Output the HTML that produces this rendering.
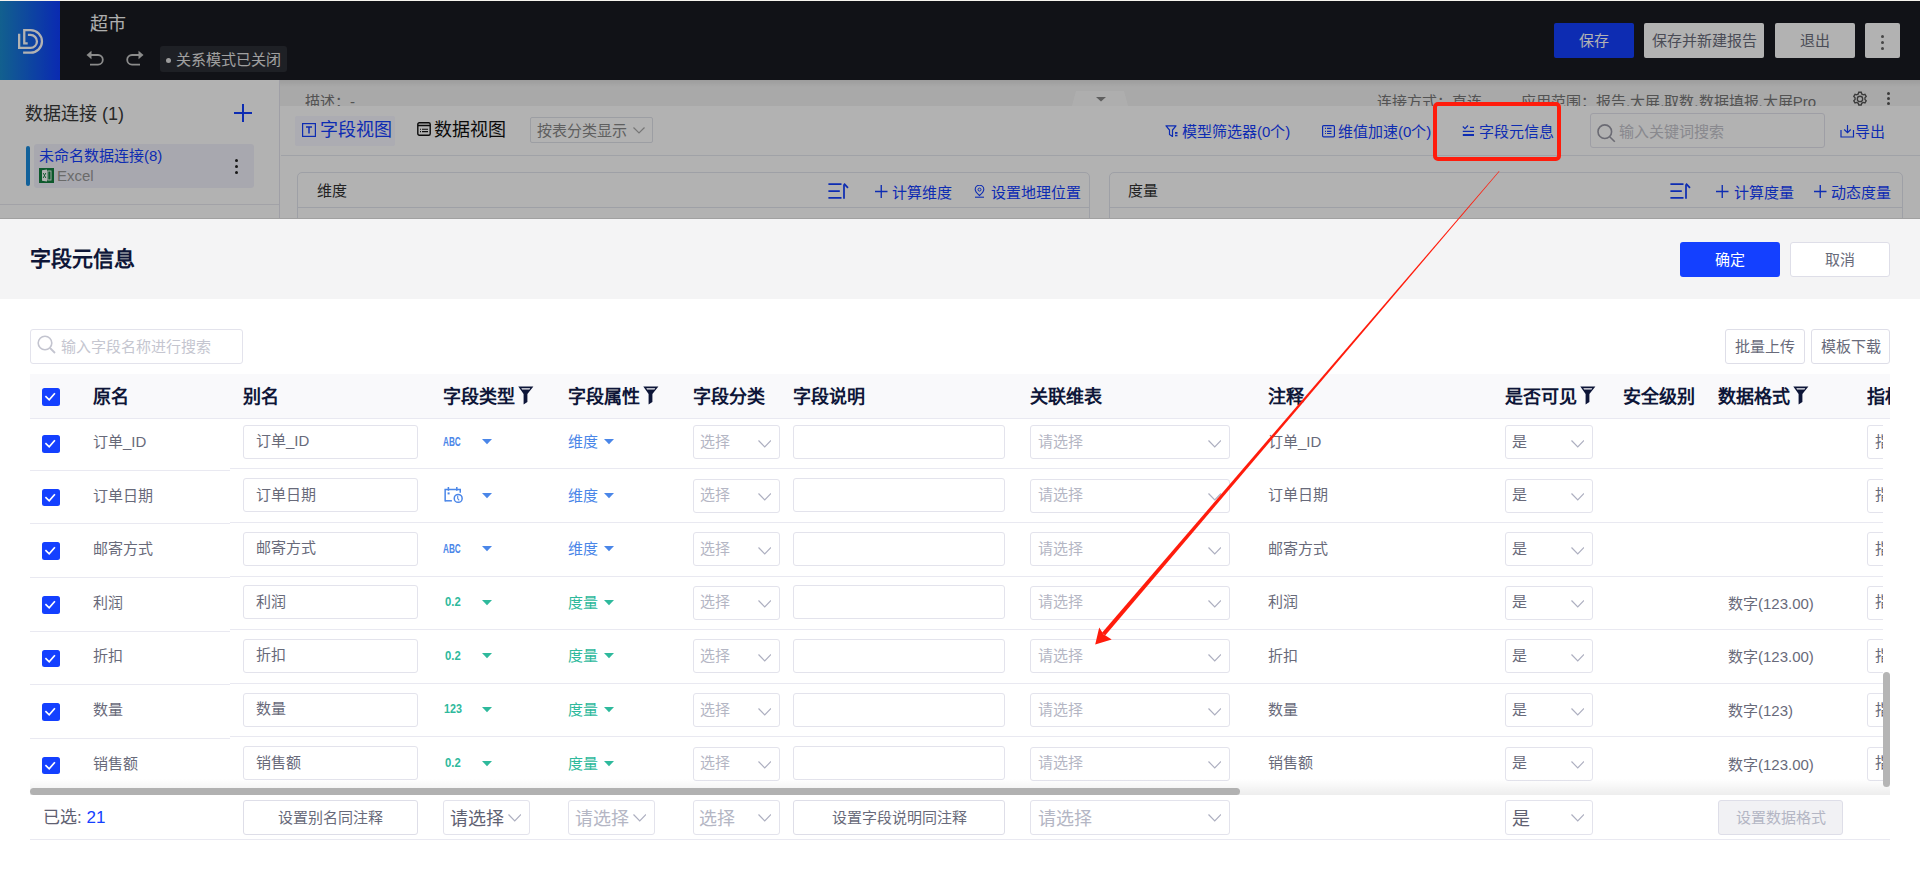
<!DOCTYPE html><html lang="zh-CN"><head><meta charset="utf-8"><style>
*{box-sizing:border-box;margin:0;padding:0}
html,body{width:1920px;height:870px;overflow:hidden;background:#fff;font-family:"Liberation Sans",sans-serif;position:relative}
.a{position:absolute;white-space:nowrap;line-height:1}
.cb{position:absolute;width:17.5px;height:17.5px;background:#1440ff;border-radius:2.5px}
.cb svg{display:block}
.box{position:absolute;border:1px solid #e3e3ec;border-radius:3px;background:#fff}
.t15{font-size:15px;color:#686a7a}
.hd{font-size:18px;font-weight:bold;color:#0e1638}
.btn{position:absolute;border:1px solid #dedee8;border-radius:3px;background:#fff;font-size:15px;color:#686a7a;text-align:center}
.bl{color:#1440ff;font-size:15px}
</style></head><body>
<div class="a" style="left:0;top:0;width:1920px;height:218px;overflow:hidden">
<div class="a" style="left:0;top:0;width:1920px;height:80.5px;background:#191b22"></div>
<div class="a" style="left:0;top:0;width:60px;height:80px;background:linear-gradient(90deg,#1a8acc,#0f3dff)"></div>
<svg class="a" style="left:10px;top:20px" width="40" height="40" viewBox="0 0 40 40"><path d="M17.9 14.95 H20.5 A6.45 6.45 0 0 1 20.5 27.85 H9.15 V13.8" fill="none" stroke="#fff" stroke-width="2.3"/><path d="M17.7 23.3 H14.25 V10.15 H20.7 A11.25 11.25 0 0 1 20.7 32.65 H13.1" fill="none" stroke="#fff" stroke-width="2.3"/></svg>
<div class="a" style="left:90px;top:15px;font-size:18px;color:#fafafa">超市</div>
<svg class="a" style="left:86px;top:49px" width="20" height="17" viewBox="0 0 20 17"><path d="M4 6 H12 A4.8 4.8 0 0 1 12 15.6 H4" fill="none" stroke="#c8c8c8" stroke-width="1.8"/><path d="M0.5 6 L5.5 1.8 V10.2Z" fill="#c8c8c8"/></svg>
<svg class="a" style="left:124px;top:49px" width="20" height="17" viewBox="0 0 20 17"><path d="M16 6 H8 A4.8 4.8 0 0 0 8 15.6 H16" fill="none" stroke="#c8c8c8" stroke-width="1.8"/><path d="M19.5 6 L14.5 1.8 V10.2Z" fill="#c8c8c8"/></svg>
<div class="a" style="left:160px;top:46px;width:127px;height:26px;background:#2c2e35;border-radius:3px"></div>
<div class="a" style="left:166px;top:58px;width:5px;height:5px;border-radius:3px;background:#e0e0e0"></div>
<div class="a" style="left:176px;top:52px;font-size:15px;color:#e6e6e6">关系模式已关闭</div>
<div class="a" style="left:1554px;top:23px;width:80px;height:35px;background:#1440ff;border-radius:2px;color:#fff;font-size:15px;text-align:center;line-height:35px">保存</div>
<div class="a" style="left:1644px;top:23px;width:120px;height:35px;background:#fff;border-radius:2px;color:#6b6d7c;font-size:15px;text-align:center;line-height:35px">保存并新建报告</div>
<div class="a" style="left:1775px;top:23px;width:80px;height:35px;background:#fff;border-radius:2px;color:#6b6d7c;font-size:15px;text-align:center;line-height:35px">退出</div>
<div class="a" style="left:1865px;top:23px;width:35px;height:35px;background:#fff;border-radius:2px"></div>
<div class="a" style="left:1881px;top:35px;width:3px;height:3px;border-radius:2px;background:#666"></div>
<div class="a" style="left:1881px;top:41px;width:3px;height:3px;border-radius:2px;background:#666"></div>
<div class="a" style="left:1881px;top:47px;width:3px;height:3px;border-radius:2px;background:#666"></div>
<div class="a" style="left:0;top:80px;width:280px;height:138px;background:#fff;border-right:1px solid #e4e4ee"></div>
<div class="a" style="left:25px;top:105px;font-size:18px;color:#3a3a3a">数据连接 (1)</div>
<div class="a" style="left:234px;top:112px;width:18px;height:2px;background:#1440ff"></div><div class="a" style="left:242px;top:104px;width:2px;height:18px;background:#1440ff"></div>
<div class="a" style="left:34px;top:144px;width:220px;height:44px;background:#f1f1fb;border-radius:3px"></div>
<div class="a" style="left:26px;top:146px;width:4px;height:40px;background:#1a8bdd;border-radius:2px"></div>
<div class="a" style="left:39px;top:148px;font-size:15px;color:#1440ff">未命名数据连接(8)</div>
<svg class="a" style="left:39px;top:168px" width="15" height="15" viewBox="0 0 15 15"><rect width="15" height="15" fill="#138040"/><path d="M3 2.3 L8 1.5 V13.5 L3 12.7Z" fill="#fff"/><rect x="8.8" y="3" width="3.2" height="9" fill="none" stroke="#fff" stroke-width="0.9"/><path d="M4.2 5 L6.8 10 M6.8 5 L4.2 10" stroke="#138040" stroke-width="0.9"/></svg>
<div class="a" style="left:57px;top:168px;font-size:15px;color:#999">Excel</div>
<div class="a" style="left:235px;top:159px;width:3px;height:3px;border-radius:2px;background:#222"></div>
<div class="a" style="left:235px;top:165px;width:3px;height:3px;border-radius:2px;background:#222"></div>
<div class="a" style="left:235px;top:171px;width:3px;height:3px;border-radius:2px;background:#222"></div>
<div class="a" style="left:0;top:204px;width:279px;height:1px;background:#e8e8f0"></div>
<div class="a" style="left:280px;top:80px;width:1640px;height:26px;background:#f2f2f2"></div><div class="a" style="left:280px;top:80px;width:1640px;height:7px;background:linear-gradient(rgba(0,0,0,0.07),rgba(0,0,0,0))"></div>
<div class="a" style="left:305px;top:93px;height:13px;overflow:hidden;font-size:15px;color:#777;line-height:17px">描述：-</div>
<svg class="a" style="left:1072px;top:91px" width="56" height="15" viewBox="0 0 56 15"><path d="M4 0 H52 L56 15 H0Z" fill="#fafafa"/><path d="M24 6 H34 L29 10.5Z" fill="#888"/></svg>
<div class="a" style="left:1377px;top:93px;height:13px;overflow:hidden;font-size:15px;color:#777;line-height:17px">连接方式：直连</div>
<div class="a" style="left:1521px;top:93px;height:13px;overflow:hidden;font-size:15px;color:#777;line-height:17px">应用范围：报告.大屏.取数.数据填报.大屏Pro</div>
<svg class="a" style="left:1851px;top:90px" width="18" height="16" viewBox="0 0 20 17.8"><g fill="none" stroke="#555" stroke-width="1.5"><circle cx="10" cy="10" r="3"/><path d="M8.6 2.5 H11.4 L11.9 4.4 L13.6 5.4 L15.5 4.8 L16.9 7.2 L15.5 8.6 V10.6 L16.9 12 L15.5 14.4 L13.6 13.8 L11.9 14.8 L11.4 16.7 H8.6 L8.1 14.8 L6.4 13.8 L4.5 14.4 L3.1 12 L4.5 10.6 V8.6 L3.1 7.2 L4.5 4.8 L6.4 5.4 L8.1 4.4Z"/></g></svg>
<div class="a" style="left:1887px;top:92px;width:3px;height:3px;border-radius:2px;background:#555"></div>
<div class="a" style="left:1887px;top:97px;width:3px;height:3px;border-radius:2px;background:#555"></div>
<div class="a" style="left:1887px;top:102px;width:3px;height:3px;border-radius:2px;background:#555"></div>
<div class="a" style="left:280px;top:106px;width:1640px;height:112px;background:#fff"></div>
<div class="a" style="left:281px;top:155px;width:1639px;height:1px;background:#e6e8f0"></div>
<div class="a" style="left:295px;top:116px;width:100px;height:30px;background:#f6f6ff;border-radius:2px"></div>
<svg class="a" style="left:302px;top:123px" width="14" height="14" viewBox="0 0 14 14"><rect x="0.6" y="0.6" width="12.8" height="12.8" fill="none" stroke="#1440ff" stroke-width="1.2"/><path d="M4 4 H10 M7 4 V10.5" stroke="#1440ff" stroke-width="1.5"/></svg>
<div class="a" style="left:320px;top:121px;font-size:18px;color:#1440ff">字段视图</div>
<svg class="a" style="left:417px;top:122px" width="14" height="14" viewBox="0 0 14 14"><rect x="0.8" y="0.8" width="12.4" height="12.4" rx="1.5" fill="none" stroke="#111" stroke-width="1.4"/><path d="M1 3.5 H13" stroke="#111" stroke-width="1.5"/><path d="M5 7.3 H11 M5 9.6 H11" stroke="#111" stroke-width="1.1"/><path d="M3 7.3 H4 M3 9.6 H4" stroke="#111" stroke-width="1.1"/></svg>
<div class="a" style="left:434px;top:121px;font-size:18px;color:#111">数据视图</div>
<div class="a" style="left:530px;top:117px;width:123px;height:26px;border:1px solid #e0e2ea;border-radius:2px"></div>
<div class="a" style="left:537px;top:123px;font-size:15px;color:#888">按表分类显示</div>
<svg class="a" style="left:633px;top:127px" width="12" height="7" viewBox="0 0 12 7"><path d="M0.5 0.5 L6.0 6 L11.5 0.5" fill="none" stroke="#aaa" stroke-width="1.2"/></svg>
<svg class="a" style="left:1165px;top:125px" width="14" height="13" viewBox="0 0 14 13"><path d="M1 0.8 H11 L7.5 5 V11.5 L4.5 9.5 V5Z" fill="none" stroke="#1440ff" stroke-width="1.2" stroke-linejoin="round"/><rect x="10" y="7" width="2.5" height="1.8" fill="#1440ff"/><rect x="10" y="9.8" width="2.5" height="1.5" fill="#1440ff"/></svg>
<div class="a bl" style="left:1182px;top:124px">模型筛选器(0个)</div>
<svg class="a" style="left:1322px;top:125px" width="13" height="13" viewBox="0 0 13 13"><rect x="0.6" y="0.6" width="11.8" height="11.2" rx="1" fill="none" stroke="#1440ff" stroke-width="1.2"/><path d="M3 3.4 H4 M5 3.4 H9.5 M3 6.4 H4 M5 6.4 H9.5 M3 8.5 H4 M5 8.5 H9.5" stroke="#1440ff" stroke-width="1.1"/></svg>
<div class="a bl" style="left:1338px;top:124px">维值加速(0个)</div>
<svg class="a" style="left:1462px;top:125px" width="13" height="12" viewBox="0 0 13 12"><path d="M0.8 1.5 L3 3.6 L6 0.5" fill="none" stroke="#1440ff" stroke-width="1.2"/><path d="M8 2.4 H12 M0.8 6.4 H12" stroke="#1440ff" stroke-width="1.1"/><path d="M0.8 10 H12" stroke="#1440ff" stroke-width="2"/></svg>
<div class="a bl" style="left:1479px;top:124px">字段元信息</div>
<div class="a" style="left:1590px;top:113px;width:235px;height:35px;border:1px solid #e3e3ec;border-radius:3px"></div>
<svg class="a" style="left:1596px;top:123px" width="20" height="20" viewBox="0 0 20 20"><circle cx="8.8" cy="8.7" r="6.8" fill="none" stroke="#9a9aa6" stroke-width="1.6"/><path d="M13.7 13.7 L18.8 18.7" stroke="#9a9aa6" stroke-width="1.6"/></svg>
<div class="a" style="left:1619px;top:124px;font-size:15px;color:#c4c4cc">输入关键词搜索</div>
<svg class="a" style="left:1840px;top:124px" width="15" height="14" viewBox="0 0 15 14"><path d="M1 6 V13 H13.5 V6" fill="none" stroke="#1440ff" stroke-width="1.2"/><path d="M7.5 1 V8.5 M4.2 5.5 L7.5 8.7 L10.8 5.5" fill="none" stroke="#1440ff" stroke-width="1.2"/></svg>
<div class="a bl" style="left:1855px;top:124px">导出</div>
<div class="a" style="left:297px;top:172px;width:793px;height:60px;border:1px solid #e3e5ee;border-radius:5px"></div>
<div class="a" style="left:298px;top:207px;width:791px;height:1px;background:#e3e5ee"></div>
<div class="a" style="left:317px;top:183px;font-size:15px;color:#333">维度</div>
<svg class="a" style="left:828px;top:183px" width="21" height="16" viewBox="0 0 21 16"><path d="M0.4 1 H13.5 M0.4 8 H11.8 M0.4 14.9 H13.5" stroke="#1440ff" stroke-width="1.75"/><path d="M16 1.5 V15.8" stroke="#1440ff" stroke-width="1.75"/><path d="M16 0.6 L20 4.8" fill="none" stroke="#1440ff" stroke-width="1.75"/></svg>
<svg class="a" style="left:875px;top:185px" width="12.5" height="13" viewBox="0 0 12.5 13"><path d="M0 6.5 H12.5 M6.25 0 V13" stroke="#1440ff" stroke-width="1.35"/></svg>
<div class="a bl" style="left:892px;top:184.5px">计算维度</div>
<svg class="a" style="left:974px;top:185px" width="11" height="13" viewBox="0 0 11 13"><path d="M5.5 10.5 C2 7.5 1.2 5.8 1.2 4.5 A4.3 4.3 0 0 1 9.8 4.5 C9.8 5.8 9 7.5 5.5 10.5Z" fill="none" stroke="#1440ff" stroke-width="1.1"/><circle cx="5.5" cy="4.6" r="1.5" fill="none" stroke="#1440ff" stroke-width="1"/><path d="M1 12.2 H10" stroke="#1440ff" stroke-width="1.1"/></svg>
<div class="a bl" style="left:991px;top:184.5px">设置地理位置</div>
<div class="a" style="left:1109px;top:172px;width:794px;height:60px;border:1px solid #e3e5ee;border-radius:5px"></div>
<div class="a" style="left:1110px;top:207px;width:792px;height:1px;background:#e3e5ee"></div>
<div class="a" style="left:1128px;top:183px;font-size:15px;color:#333">度量</div>
<svg class="a" style="left:1670px;top:183px" width="21" height="16" viewBox="0 0 21 16"><path d="M0.4 1 H13.5 M0.4 8 H11.8 M0.4 14.9 H13.5" stroke="#1440ff" stroke-width="1.75"/><path d="M16 1.5 V15.8" stroke="#1440ff" stroke-width="1.75"/><path d="M16 0.6 L20 4.8" fill="none" stroke="#1440ff" stroke-width="1.75"/></svg>
<svg class="a" style="left:1716px;top:185px" width="12.5" height="13" viewBox="0 0 12.5 13"><path d="M0 6.5 H12.5 M6.25 0 V13" stroke="#1440ff" stroke-width="1.35"/></svg>
<div class="a bl" style="left:1734px;top:184.5px">计算度量</div>
<svg class="a" style="left:1814px;top:185px" width="12.5" height="13" viewBox="0 0 12.5 13"><path d="M0 6.5 H12.5 M6.25 0 V13" stroke="#1440ff" stroke-width="1.35"/></svg>
<div class="a bl" style="left:1831px;top:184.5px">动态度量</div>
<div class="a" style="left:0;top:0;width:1920px;height:218px;background:rgba(0,0,0,0.3)"></div>
<div class="a" style="left:0;top:0;width:1920px;height:1px;background:#f6f4ee"></div>
</div>
<div class="a" style="left:0;top:218px;width:1920px;height:1px;background:#a0a0a0"></div>
<div class="a" style="left:0;top:219px;width:1920px;height:80px;background:#f4f4f5"></div>
<div class="a" style="left:30px;top:248px;font-size:21px;font-weight:bold;color:#0e1638">字段元信息</div>
<div class="a" style="left:1680px;top:242px;width:100px;height:35px;background:#1440ff;border-radius:3px;color:#fff;font-size:15px;text-align:center;line-height:35px">确定</div>
<div class="btn" style="left:1790px;top:242px;width:100px;height:35px;line-height:33px">取消</div>
<div class="box" style="left:30px;top:329px;width:213px;height:35px"></div>
<svg class="a" style="left:37px;top:335px" width="20" height="20" viewBox="0 0 20 20"><circle cx="8" cy="8" r="6.8" fill="none" stroke="#c3c4cf" stroke-width="1.6"/><path d="M13 13 L18 18" stroke="#c3c4cf" stroke-width="1.8"/></svg>
<div class="a" style="left:61px;top:339px;font-size:15px;color:#c5c6d0">输入字段名称进行搜索</div>
<div class="btn" style="left:1725px;top:329px;width:80px;height:35px;line-height:33px">批量上传</div>
<div class="btn" style="left:1811px;top:329px;width:79px;height:35px;line-height:33px">模板下载</div>
<div class="a" style="left:30px;top:374px;width:1860px;height:44px;background:#f9f9fb"></div>
<div class="a" style="left:30px;top:418px;width:1860px;height:1px;background:#e9e9f1"></div>
<div class="cb" style="left:42.3px;top:388.2px"><svg width="17" height="17" viewBox="0 0 17 17"><path d="M3.4 8.2 L7.2 11.8 L12.9 5.2" fill="none" stroke="#fff" stroke-width="1.7"/></svg></div>
<div class="a hd" style="left:93px;top:388px">原名</div>
<div class="a hd" style="left:243px;top:388px">别名</div>
<div class="a hd" style="left:443px;top:388px">字段类型</div>
<svg class="a" style="left:517.6px;top:385.5px" width="16" height="19" viewBox="0 0 16 19"><path d="M0.3 0.5 H15.4 L9.4 8 V16 L5.6 18.4 V8 Z M3.3 2.3 H12.2 L11.5 3.4 H4.1 Z" fill="#0e1638" fill-rule="evenodd"/></svg>
<div class="a hd" style="left:568px;top:388px">字段属性</div>
<svg class="a" style="left:642.6px;top:385.5px" width="16" height="19" viewBox="0 0 16 19"><path d="M0.3 0.5 H15.4 L9.4 8 V16 L5.6 18.4 V8 Z M3.3 2.3 H12.2 L11.5 3.4 H4.1 Z" fill="#0e1638" fill-rule="evenodd"/></svg>
<div class="a hd" style="left:693px;top:388px">字段分类</div>
<div class="a hd" style="left:793px;top:388px">字段说明</div>
<div class="a hd" style="left:1030px;top:388px">关联维表</div>
<div class="a hd" style="left:1268px;top:388px">注释</div>
<div class="a hd" style="left:1505px;top:388px">是否可见</div>
<svg class="a" style="left:1579.6px;top:385.5px" width="16" height="19" viewBox="0 0 16 19"><path d="M0.3 0.5 H15.4 L9.4 8 V16 L5.6 18.4 V8 Z M3.3 2.3 H12.2 L11.5 3.4 H4.1 Z" fill="#0e1638" fill-rule="evenodd"/></svg>
<div class="a hd" style="left:1623px;top:388px">安全级别</div>
<div class="a hd" style="left:1718px;top:388px">数据格式</div>
<svg class="a" style="left:1792.6px;top:385.5px" width="16" height="19" viewBox="0 0 16 19"><path d="M0.3 0.5 H15.4 L9.4 8 V16 L5.6 18.4 V8 Z M3.3 2.3 H12.2 L11.5 3.4 H4.1 Z" fill="#0e1638" fill-rule="evenodd"/></svg>
<div class="a" style="left:1867px;top:374px;width:23px;height:44px;overflow:hidden"><div class="a hd" style="left:0;top:14px">指标</div></div>
<div class="a" style="left:30px;top:419px;width:1853px;height:369px;overflow:hidden">
<div class="a" style="left:0px;top:50.8px;width:200px;height:1px;background:#e9e9f1"></div>
<div class="a" style="left:200px;top:49.3px;width:1700px;height:1px;background:#e9e9f1"></div>
<div class="cb" style="left:12.299999999999997px;top:16.2px"><svg width="17" height="17" viewBox="0 0 17 17"><path d="M3.4 8.2 L7.2 11.8 L12.9 5.2" fill="none" stroke="#fff" stroke-width="1.7"/></svg></div>
<div class="a t15" style="left:63px;top:15.0px">订单_ID</div>
<div class="box" style="left:213px;top:5.5px;width:175px;height:34px"></div>
<div class="a t15" style="left:226px;top:14.0px">订单_ID</div>
<div class="a" style="left:413px;top:15.9px;font-size:13px;font-weight:bold;color:#4a86e8;transform:scaleX(0.63);transform-origin:0 0">ABC</div>
<svg class="a" style="left:452px;top:20.0px" width="10" height="6" viewBox="0 0 10 6"><path d="M0 0 H10 L5 5.3Z" fill="#4a86e8"/></svg>
<div class="a" style="left:538px;top:15.0px;font-size:15px;color:#4a86e8">维度</div>
<svg class="a" style="left:574px;top:20.0px" width="10" height="6" viewBox="0 0 10 6"><path d="M0 0 H10 L5 5.3Z" fill="#4a86e8"/></svg>
<div class="box" style="left:663px;top:6.0px;width:87px;height:34px"></div>
<div class="a" style="left:670px;top:14.5px;font-size:15px;color:#b4b6c4">选择</div>
<svg class="a" style="left:727.8px;top:20.5px" width="13.5" height="8" viewBox="0 0 13.5 8"><path d="M0.5 0.5 L6.75 7 L13.0 0.5" fill="none" stroke="#adafc0" stroke-width="1.2"/></svg>
<div class="box" style="left:763px;top:5.5px;width:212px;height:34px"></div>
<div class="box" style="left:1000px;top:6.0px;width:200px;height:34px"></div>
<div class="a" style="left:1008px;top:14.5px;font-size:15px;color:#b4b6c4">请选择</div>
<svg class="a" style="left:1177.8px;top:20.5px" width="13.5" height="8" viewBox="0 0 13.5 8"><path d="M0.5 0.5 L6.75 7 L13.0 0.5" fill="none" stroke="#adafc0" stroke-width="1.2"/></svg>
<div class="a t15" style="left:1238px;top:14.5px">订单_ID</div>
<div class="box" style="left:1475px;top:6.0px;width:88px;height:34px"></div>
<div class="a t15" style="left:1482px;top:14.5px">是</div>
<svg class="a" style="left:1540.8px;top:20.5px" width="13.5" height="8" viewBox="0 0 13.5 8"><path d="M0.5 0.5 L6.75 7 L13.0 0.5" fill="none" stroke="#adafc0" stroke-width="1.2"/></svg>
<div class="box" style="left:1837px;top:6.0px;width:60px;height:34px"></div>
<div class="a t15" style="left:1845px;top:14.5px">指标</div>
<div class="a" style="left:0px;top:104.4px;width:200px;height:1px;background:#e9e9f1"></div>
<div class="a" style="left:200px;top:102.9px;width:1700px;height:1px;background:#e9e9f1"></div>
<div class="cb" style="left:12.299999999999997px;top:69.8px"><svg width="17" height="17" viewBox="0 0 17 17"><path d="M3.4 8.2 L7.2 11.8 L12.9 5.2" fill="none" stroke="#fff" stroke-width="1.7"/></svg></div>
<div class="a t15" style="left:63px;top:68.6px">订单日期</div>
<div class="box" style="left:213px;top:59.1px;width:175px;height:34px"></div>
<div class="a t15" style="left:226px;top:67.6px">订单日期</div>
<svg class="a" style="left:410px;top:62.8px" width="28" height="24" viewBox="0 0 28 24"><g fill="none" stroke="#4a86e8" stroke-width="1.5"><path d="M5.15 19.5 V7.6 H20.25 V10.8"/><path d="M5.15 18.8 H11.9"/><path d="M8.4 5 V8.8 M16.8 5 V8.8"/><circle cx="18.2" cy="16.4" r="3.95"/><path d="M17.7 13.8 V16.6 L19.2 18.4" stroke-width="1.1"/></g><rect x="7.6" y="10.4" width="2" height="2" fill="#4a86e8"/></svg>
<svg class="a" style="left:452px;top:73.6px" width="10" height="6" viewBox="0 0 10 6"><path d="M0 0 H10 L5 5.3Z" fill="#4a86e8"/></svg>
<div class="a" style="left:538px;top:68.6px;font-size:15px;color:#4a86e8">维度</div>
<svg class="a" style="left:574px;top:73.6px" width="10" height="6" viewBox="0 0 10 6"><path d="M0 0 H10 L5 5.3Z" fill="#4a86e8"/></svg>
<div class="box" style="left:663px;top:59.6px;width:87px;height:34px"></div>
<div class="a" style="left:670px;top:68.1px;font-size:15px;color:#b4b6c4">选择</div>
<svg class="a" style="left:727.8px;top:74.1px" width="13.5" height="8" viewBox="0 0 13.5 8"><path d="M0.5 0.5 L6.75 7 L13.0 0.5" fill="none" stroke="#adafc0" stroke-width="1.2"/></svg>
<div class="box" style="left:763px;top:59.1px;width:212px;height:34px"></div>
<div class="box" style="left:1000px;top:59.6px;width:200px;height:34px"></div>
<div class="a" style="left:1008px;top:68.1px;font-size:15px;color:#b4b6c4">请选择</div>
<svg class="a" style="left:1177.8px;top:74.1px" width="13.5" height="8" viewBox="0 0 13.5 8"><path d="M0.5 0.5 L6.75 7 L13.0 0.5" fill="none" stroke="#adafc0" stroke-width="1.2"/></svg>
<div class="a t15" style="left:1238px;top:68.1px">订单日期</div>
<div class="box" style="left:1475px;top:59.6px;width:88px;height:34px"></div>
<div class="a t15" style="left:1482px;top:68.1px">是</div>
<svg class="a" style="left:1540.8px;top:74.1px" width="13.5" height="8" viewBox="0 0 13.5 8"><path d="M0.5 0.5 L6.75 7 L13.0 0.5" fill="none" stroke="#adafc0" stroke-width="1.2"/></svg>
<div class="box" style="left:1837px;top:59.6px;width:60px;height:34px"></div>
<div class="a t15" style="left:1845px;top:68.1px">指标</div>
<div class="a" style="left:0px;top:158.0px;width:200px;height:1px;background:#e9e9f1"></div>
<div class="a" style="left:200px;top:156.5px;width:1700px;height:1px;background:#e9e9f1"></div>
<div class="cb" style="left:12.299999999999997px;top:123.4px"><svg width="17" height="17" viewBox="0 0 17 17"><path d="M3.4 8.2 L7.2 11.8 L12.9 5.2" fill="none" stroke="#fff" stroke-width="1.7"/></svg></div>
<div class="a t15" style="left:63px;top:122.2px">邮寄方式</div>
<div class="box" style="left:213px;top:112.7px;width:175px;height:34px"></div>
<div class="a t15" style="left:226px;top:121.2px">邮寄方式</div>
<div class="a" style="left:413px;top:123.1px;font-size:13px;font-weight:bold;color:#4a86e8;transform:scaleX(0.63);transform-origin:0 0">ABC</div>
<svg class="a" style="left:452px;top:127.2px" width="10" height="6" viewBox="0 0 10 6"><path d="M0 0 H10 L5 5.3Z" fill="#4a86e8"/></svg>
<div class="a" style="left:538px;top:122.2px;font-size:15px;color:#4a86e8">维度</div>
<svg class="a" style="left:574px;top:127.2px" width="10" height="6" viewBox="0 0 10 6"><path d="M0 0 H10 L5 5.3Z" fill="#4a86e8"/></svg>
<div class="box" style="left:663px;top:113.2px;width:87px;height:34px"></div>
<div class="a" style="left:670px;top:121.7px;font-size:15px;color:#b4b6c4">选择</div>
<svg class="a" style="left:727.8px;top:127.7px" width="13.5" height="8" viewBox="0 0 13.5 8"><path d="M0.5 0.5 L6.75 7 L13.0 0.5" fill="none" stroke="#adafc0" stroke-width="1.2"/></svg>
<div class="box" style="left:763px;top:112.7px;width:212px;height:34px"></div>
<div class="box" style="left:1000px;top:113.2px;width:200px;height:34px"></div>
<div class="a" style="left:1008px;top:121.7px;font-size:15px;color:#b4b6c4">请选择</div>
<svg class="a" style="left:1177.8px;top:127.7px" width="13.5" height="8" viewBox="0 0 13.5 8"><path d="M0.5 0.5 L6.75 7 L13.0 0.5" fill="none" stroke="#adafc0" stroke-width="1.2"/></svg>
<div class="a t15" style="left:1238px;top:121.7px">邮寄方式</div>
<div class="box" style="left:1475px;top:113.2px;width:88px;height:34px"></div>
<div class="a t15" style="left:1482px;top:121.7px">是</div>
<svg class="a" style="left:1540.8px;top:127.7px" width="13.5" height="8" viewBox="0 0 13.5 8"><path d="M0.5 0.5 L6.75 7 L13.0 0.5" fill="none" stroke="#adafc0" stroke-width="1.2"/></svg>
<div class="box" style="left:1837px;top:113.2px;width:60px;height:34px"></div>
<div class="a t15" style="left:1845px;top:121.7px">指标</div>
<div class="a" style="left:0px;top:211.6px;width:200px;height:1px;background:#e9e9f1"></div>
<div class="a" style="left:200px;top:210.1px;width:1700px;height:1px;background:#e9e9f1"></div>
<div class="cb" style="left:12.299999999999997px;top:177.0px"><svg width="17" height="17" viewBox="0 0 17 17"><path d="M3.4 8.2 L7.2 11.8 L12.9 5.2" fill="none" stroke="#fff" stroke-width="1.7"/></svg></div>
<div class="a t15" style="left:63px;top:175.8px">利润</div>
<div class="box" style="left:213px;top:166.3px;width:175px;height:34px"></div>
<div class="a t15" style="left:226px;top:174.8px">利润</div>
<div class="a" style="left:415px;top:177.0px;font-size:12.5px;font-weight:bold;color:#2eb99c;transform:scaleX(0.9);transform-origin:0 0">0.2</div>
<svg class="a" style="left:452px;top:180.8px" width="10" height="6" viewBox="0 0 10 6"><path d="M0 0 H10 L5 5.3Z" fill="#2eb99c"/></svg>
<div class="a" style="left:538px;top:175.8px;font-size:15px;color:#2eb99c">度量</div>
<svg class="a" style="left:574px;top:180.8px" width="10" height="6" viewBox="0 0 10 6"><path d="M0 0 H10 L5 5.3Z" fill="#2eb99c"/></svg>
<div class="box" style="left:663px;top:166.8px;width:87px;height:34px"></div>
<div class="a" style="left:670px;top:175.3px;font-size:15px;color:#b4b6c4">选择</div>
<svg class="a" style="left:727.8px;top:181.3px" width="13.5" height="8" viewBox="0 0 13.5 8"><path d="M0.5 0.5 L6.75 7 L13.0 0.5" fill="none" stroke="#adafc0" stroke-width="1.2"/></svg>
<div class="box" style="left:763px;top:166.3px;width:212px;height:34px"></div>
<div class="box" style="left:1000px;top:166.8px;width:200px;height:34px"></div>
<div class="a" style="left:1008px;top:175.3px;font-size:15px;color:#b4b6c4">请选择</div>
<svg class="a" style="left:1177.8px;top:181.3px" width="13.5" height="8" viewBox="0 0 13.5 8"><path d="M0.5 0.5 L6.75 7 L13.0 0.5" fill="none" stroke="#adafc0" stroke-width="1.2"/></svg>
<div class="a t15" style="left:1238px;top:175.3px">利润</div>
<div class="box" style="left:1475px;top:166.8px;width:88px;height:34px"></div>
<div class="a t15" style="left:1482px;top:175.3px">是</div>
<svg class="a" style="left:1540.8px;top:181.3px" width="13.5" height="8" viewBox="0 0 13.5 8"><path d="M0.5 0.5 L6.75 7 L13.0 0.5" fill="none" stroke="#adafc0" stroke-width="1.2"/></svg>
<div class="a t15" style="left:1698px;top:176.8px">数字(123.00)</div>
<div class="box" style="left:1837px;top:166.8px;width:60px;height:34px"></div>
<div class="a t15" style="left:1845px;top:175.3px">指标</div>
<div class="a" style="left:0px;top:265.2px;width:200px;height:1px;background:#e9e9f1"></div>
<div class="a" style="left:200px;top:263.7px;width:1700px;height:1px;background:#e9e9f1"></div>
<div class="cb" style="left:12.299999999999997px;top:230.6px"><svg width="17" height="17" viewBox="0 0 17 17"><path d="M3.4 8.2 L7.2 11.8 L12.9 5.2" fill="none" stroke="#fff" stroke-width="1.7"/></svg></div>
<div class="a t15" style="left:63px;top:229.4px">折扣</div>
<div class="box" style="left:213px;top:219.9px;width:175px;height:34px"></div>
<div class="a t15" style="left:226px;top:228.4px">折扣</div>
<div class="a" style="left:415px;top:230.6px;font-size:12.5px;font-weight:bold;color:#2eb99c;transform:scaleX(0.9);transform-origin:0 0">0.2</div>
<svg class="a" style="left:452px;top:234.4px" width="10" height="6" viewBox="0 0 10 6"><path d="M0 0 H10 L5 5.3Z" fill="#2eb99c"/></svg>
<div class="a" style="left:538px;top:229.4px;font-size:15px;color:#2eb99c">度量</div>
<svg class="a" style="left:574px;top:234.4px" width="10" height="6" viewBox="0 0 10 6"><path d="M0 0 H10 L5 5.3Z" fill="#2eb99c"/></svg>
<div class="box" style="left:663px;top:220.4px;width:87px;height:34px"></div>
<div class="a" style="left:670px;top:228.9px;font-size:15px;color:#b4b6c4">选择</div>
<svg class="a" style="left:727.8px;top:234.9px" width="13.5" height="8" viewBox="0 0 13.5 8"><path d="M0.5 0.5 L6.75 7 L13.0 0.5" fill="none" stroke="#adafc0" stroke-width="1.2"/></svg>
<div class="box" style="left:763px;top:219.9px;width:212px;height:34px"></div>
<div class="box" style="left:1000px;top:220.4px;width:200px;height:34px"></div>
<div class="a" style="left:1008px;top:228.9px;font-size:15px;color:#b4b6c4">请选择</div>
<svg class="a" style="left:1177.8px;top:234.9px" width="13.5" height="8" viewBox="0 0 13.5 8"><path d="M0.5 0.5 L6.75 7 L13.0 0.5" fill="none" stroke="#adafc0" stroke-width="1.2"/></svg>
<div class="a t15" style="left:1238px;top:228.9px">折扣</div>
<div class="box" style="left:1475px;top:220.4px;width:88px;height:34px"></div>
<div class="a t15" style="left:1482px;top:228.9px">是</div>
<svg class="a" style="left:1540.8px;top:234.9px" width="13.5" height="8" viewBox="0 0 13.5 8"><path d="M0.5 0.5 L6.75 7 L13.0 0.5" fill="none" stroke="#adafc0" stroke-width="1.2"/></svg>
<div class="a t15" style="left:1698px;top:230.4px">数字(123.00)</div>
<div class="box" style="left:1837px;top:220.4px;width:60px;height:34px"></div>
<div class="a t15" style="left:1845px;top:228.9px">指标</div>
<div class="a" style="left:0px;top:318.8px;width:200px;height:1px;background:#e9e9f1"></div>
<div class="a" style="left:200px;top:317.3px;width:1700px;height:1px;background:#e9e9f1"></div>
<div class="cb" style="left:12.299999999999997px;top:284.2px"><svg width="17" height="17" viewBox="0 0 17 17"><path d="M3.4 8.2 L7.2 11.8 L12.9 5.2" fill="none" stroke="#fff" stroke-width="1.7"/></svg></div>
<div class="a t15" style="left:63px;top:283.0px">数量</div>
<div class="box" style="left:213px;top:273.5px;width:175px;height:34px"></div>
<div class="a t15" style="left:226px;top:282.0px">数量</div>
<div class="a" style="left:414px;top:284.2px;font-size:12.5px;font-weight:bold;color:#2eb99c;transform:scaleX(0.86);transform-origin:0 0">123</div>
<svg class="a" style="left:452px;top:288.0px" width="10" height="6" viewBox="0 0 10 6"><path d="M0 0 H10 L5 5.3Z" fill="#2eb99c"/></svg>
<div class="a" style="left:538px;top:283.0px;font-size:15px;color:#2eb99c">度量</div>
<svg class="a" style="left:574px;top:288.0px" width="10" height="6" viewBox="0 0 10 6"><path d="M0 0 H10 L5 5.3Z" fill="#2eb99c"/></svg>
<div class="box" style="left:663px;top:274.0px;width:87px;height:34px"></div>
<div class="a" style="left:670px;top:282.5px;font-size:15px;color:#b4b6c4">选择</div>
<svg class="a" style="left:727.8px;top:288.5px" width="13.5" height="8" viewBox="0 0 13.5 8"><path d="M0.5 0.5 L6.75 7 L13.0 0.5" fill="none" stroke="#adafc0" stroke-width="1.2"/></svg>
<div class="box" style="left:763px;top:273.5px;width:212px;height:34px"></div>
<div class="box" style="left:1000px;top:274.0px;width:200px;height:34px"></div>
<div class="a" style="left:1008px;top:282.5px;font-size:15px;color:#b4b6c4">请选择</div>
<svg class="a" style="left:1177.8px;top:288.5px" width="13.5" height="8" viewBox="0 0 13.5 8"><path d="M0.5 0.5 L6.75 7 L13.0 0.5" fill="none" stroke="#adafc0" stroke-width="1.2"/></svg>
<div class="a t15" style="left:1238px;top:282.5px">数量</div>
<div class="box" style="left:1475px;top:274.0px;width:88px;height:34px"></div>
<div class="a t15" style="left:1482px;top:282.5px">是</div>
<svg class="a" style="left:1540.8px;top:288.5px" width="13.5" height="8" viewBox="0 0 13.5 8"><path d="M0.5 0.5 L6.75 7 L13.0 0.5" fill="none" stroke="#adafc0" stroke-width="1.2"/></svg>
<div class="a t15" style="left:1698px;top:284.0px">数字(123)</div>
<div class="box" style="left:1837px;top:274.0px;width:60px;height:34px"></div>
<div class="a t15" style="left:1845px;top:282.5px">指标</div>
<div class="a" style="left:0px;top:372.4px;width:200px;height:1px;background:#e9e9f1"></div>
<div class="a" style="left:200px;top:370.9px;width:1700px;height:1px;background:#e9e9f1"></div>
<div class="cb" style="left:12.299999999999997px;top:337.8px"><svg width="17" height="17" viewBox="0 0 17 17"><path d="M3.4 8.2 L7.2 11.8 L12.9 5.2" fill="none" stroke="#fff" stroke-width="1.7"/></svg></div>
<div class="a t15" style="left:63px;top:336.6px">销售额</div>
<div class="box" style="left:213px;top:327.1px;width:175px;height:34px"></div>
<div class="a t15" style="left:226px;top:335.6px">销售额</div>
<div class="a" style="left:415px;top:337.8px;font-size:12.5px;font-weight:bold;color:#2eb99c;transform:scaleX(0.9);transform-origin:0 0">0.2</div>
<svg class="a" style="left:452px;top:341.6px" width="10" height="6" viewBox="0 0 10 6"><path d="M0 0 H10 L5 5.3Z" fill="#2eb99c"/></svg>
<div class="a" style="left:538px;top:336.6px;font-size:15px;color:#2eb99c">度量</div>
<svg class="a" style="left:574px;top:341.6px" width="10" height="6" viewBox="0 0 10 6"><path d="M0 0 H10 L5 5.3Z" fill="#2eb99c"/></svg>
<div class="box" style="left:663px;top:327.6px;width:87px;height:34px"></div>
<div class="a" style="left:670px;top:336.1px;font-size:15px;color:#b4b6c4">选择</div>
<svg class="a" style="left:727.8px;top:342.1px" width="13.5" height="8" viewBox="0 0 13.5 8"><path d="M0.5 0.5 L6.75 7 L13.0 0.5" fill="none" stroke="#adafc0" stroke-width="1.2"/></svg>
<div class="box" style="left:763px;top:327.1px;width:212px;height:34px"></div>
<div class="box" style="left:1000px;top:327.6px;width:200px;height:34px"></div>
<div class="a" style="left:1008px;top:336.1px;font-size:15px;color:#b4b6c4">请选择</div>
<svg class="a" style="left:1177.8px;top:342.1px" width="13.5" height="8" viewBox="0 0 13.5 8"><path d="M0.5 0.5 L6.75 7 L13.0 0.5" fill="none" stroke="#adafc0" stroke-width="1.2"/></svg>
<div class="a t15" style="left:1238px;top:336.1px">销售额</div>
<div class="box" style="left:1475px;top:327.6px;width:88px;height:34px"></div>
<div class="a t15" style="left:1482px;top:336.1px">是</div>
<svg class="a" style="left:1540.8px;top:342.1px" width="13.5" height="8" viewBox="0 0 13.5 8"><path d="M0.5 0.5 L6.75 7 L13.0 0.5" fill="none" stroke="#adafc0" stroke-width="1.2"/></svg>
<div class="a t15" style="left:1698px;top:337.6px">数字(123.00)</div>
<div class="box" style="left:1837px;top:327.6px;width:60px;height:34px"></div>
<div class="a t15" style="left:1845px;top:336.1px">指标</div>
</div>
<div class="a" style="left:30px;top:779px;width:1860px;height:16px;background:linear-gradient(rgba(0,0,0,0),rgba(0,0,0,0.07))"></div>
<div class="a" style="left:30px;top:788px;width:1210px;height:7px;background:#b1b1b1;border-radius:4px"></div>
<div class="a" style="left:1883px;top:672px;width:7px;height:115px;background:#b5b5b5;border-radius:4px"></div>
<div class="a" style="left:43px;top:808.5px;font-size:17px;color:#5f6172">已选: <span style="color:#1440ff">21</span></div>
<div class="btn" style="left:243px;top:800px;width:175px;height:35px;line-height:33px">设置别名同注释</div>
<div class="box" style="left:443px;top:800px;width:87px;height:35px"></div>
<div class="a" style="left:450px;top:809.5px;font-size:18px;color:#5f6172">请选择</div>
<svg class="a" style="left:507.8px;top:814.2px" width="13.5" height="8" viewBox="0 0 13.5 8"><path d="M0.5 0.5 L6.75 7 L13.0 0.5" fill="none" stroke="#adafc0" stroke-width="1.2"/></svg>
<div class="box" style="left:568px;top:800px;width:87px;height:35px"></div>
<div class="a" style="left:575px;top:809.5px;font-size:18px;color:#b4b6c4">请选择</div>
<svg class="a" style="left:632.8px;top:814.2px" width="13.5" height="8" viewBox="0 0 13.5 8"><path d="M0.5 0.5 L6.75 7 L13.0 0.5" fill="none" stroke="#adafc0" stroke-width="1.2"/></svg>
<div class="box" style="left:693px;top:800px;width:87px;height:35px"></div>
<div class="a" style="left:699px;top:809.5px;font-size:18px;color:#b4b6c4">选择</div>
<svg class="a" style="left:757.8px;top:814.2px" width="13.5" height="8" viewBox="0 0 13.5 8"><path d="M0.5 0.5 L6.75 7 L13.0 0.5" fill="none" stroke="#adafc0" stroke-width="1.2"/></svg>
<div class="btn" style="left:793px;top:800px;width:212px;height:35px;line-height:33px">设置字段说明同注释</div>
<div class="box" style="left:1030px;top:800px;width:200px;height:35px"></div>
<div class="a" style="left:1038px;top:809.5px;font-size:18px;color:#b4b6c4">请选择</div>
<svg class="a" style="left:1207.8px;top:814.2px" width="13.5" height="8" viewBox="0 0 13.5 8"><path d="M0.5 0.5 L6.75 7 L13.0 0.5" fill="none" stroke="#adafc0" stroke-width="1.2"/></svg>
<div class="box" style="left:1505px;top:800px;width:88px;height:35px"></div>
<div class="a" style="left:1512px;top:809.5px;font-size:18px;color:#5f6172">是</div>
<svg class="a" style="left:1570.8px;top:814.2px" width="13.5" height="8" viewBox="0 0 13.5 8"><path d="M0.5 0.5 L6.75 7 L13.0 0.5" fill="none" stroke="#adafc0" stroke-width="1.2"/></svg>
<div class="btn" style="left:1718px;top:800px;width:125px;height:35px;line-height:33px;background:#f1f1f4;color:#b4b6c4">设置数据格式</div>
<div class="a" style="left:30px;top:839px;width:1860px;height:1px;background:#e9e9f1"></div>
<div class="a" style="left:1433px;top:102px;width:128px;height:59px;border:4px solid #ff1c0c;border-radius:5px"></div>
<svg class="a" style="left:0;top:0" width="1920" height="870" viewBox="0 0 1920 870"><path d="M1499.4 171.5 L1499.0 171.1 L1102.0 632.8 L1105.2 635.6 Z" fill="#ff1c0c"/><path d="M1095.2 644.4 L1099.2 627.6 L1103.5 634.2 L1111.7 639.4Z" fill="#ff1c0c"/></svg>
</body></html>
